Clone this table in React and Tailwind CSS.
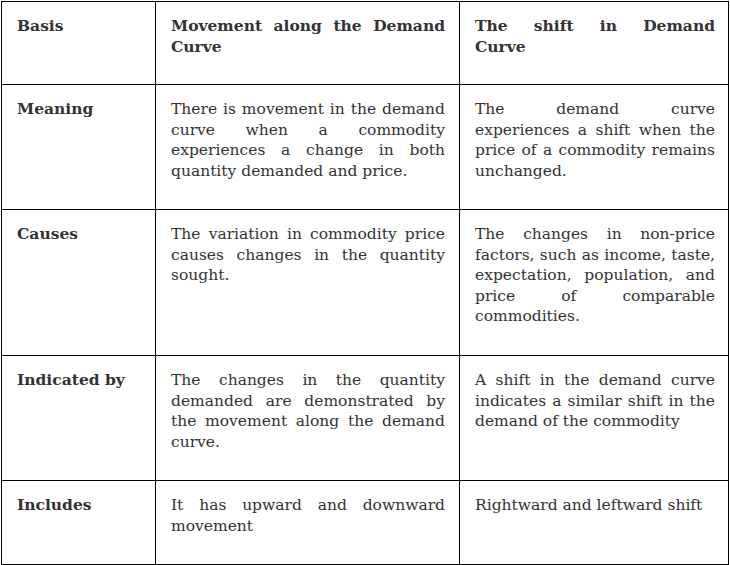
import React from "react";

const rows = [
  {
    label: "Basis",
    h: "h-[83px]",
    head: true,
    a: ["Movement along the Demand", "Curve"],
    b: ["The shift in Demand", "Curve"],
  },
  {
    label: "Meaning",
    h: "h-[125px]",
    a: ["There is movement in the demand", "curve when a commodity", "experiences a change in both", "quantity demanded and price."],
    b: ["The demand curve", "experiences a shift when the", "price of a commodity remains", "unchanged."],
  },
  {
    label: "Causes",
    h: "h-[146px]",
    a: ["The variation in commodity price", "causes changes in the quantity", "sought."],
    b: ["The changes in non-price", "factors, such as income, taste,", "expectation, population, and", "price of comparable", "commodities."],
  },
  {
    label: "Indicated by",
    h: "h-[125px]",
    a: ["The changes in the quantity", "demanded are demonstrated by", "the movement along the demand", "curve."],
    b: ["A shift in the demand curve", "indicates a similar shift in the", "demand of the commodity"],
  },
  {
    label: "Includes",
    h: "h-[84px]",
    a: ["It has upward and downward", "movement"],
    b: ["Rightward and leftward shift"],
  },
];

function Lines({ lines, bold }) {
  return (
    <div className={bold ? "font-bold" : ""}>
      {lines.map((l, i) => (
        <div
          key={i}
          className={
            i < lines.length - 1
              ? "whitespace-nowrap text-justify [text-align-last:justify]"
              : "whitespace-nowrap text-left"
          }
        >
          {l}
        </div>
      ))}
    </div>
  );
}

export default function App() {
  return (
    <div className="bg-white w-[730px] h-[565px] pl-px pt-px">
      <table
        className="border-collapse text-[#333] text-[15.5px] leading-[20.5px]"
        style={{ fontFamily: '"DejaVu Serif", Georgia, serif' }}
      >
        <tbody>
          {rows.map((r) => (
            <tr key={r.label} className={r.h}>
              <td className="w-[154px] border border-black align-top pl-[15px] pr-2 pt-[14px] font-bold">
                {r.label}
              </td>
              <td className="w-[304px] border border-black align-top pl-[15px] pr-[14px] pt-[14px]">
                <Lines lines={r.a} bold={r.head} />
              </td>
              <td className="w-[269px] border border-black align-top pl-[15px] pr-[13px] pt-[14px]">
                <Lines lines={r.b} bold={r.head} />
              </td>
            </tr>
          ))}
        </tbody>
      </table>
    </div>
  );
}
